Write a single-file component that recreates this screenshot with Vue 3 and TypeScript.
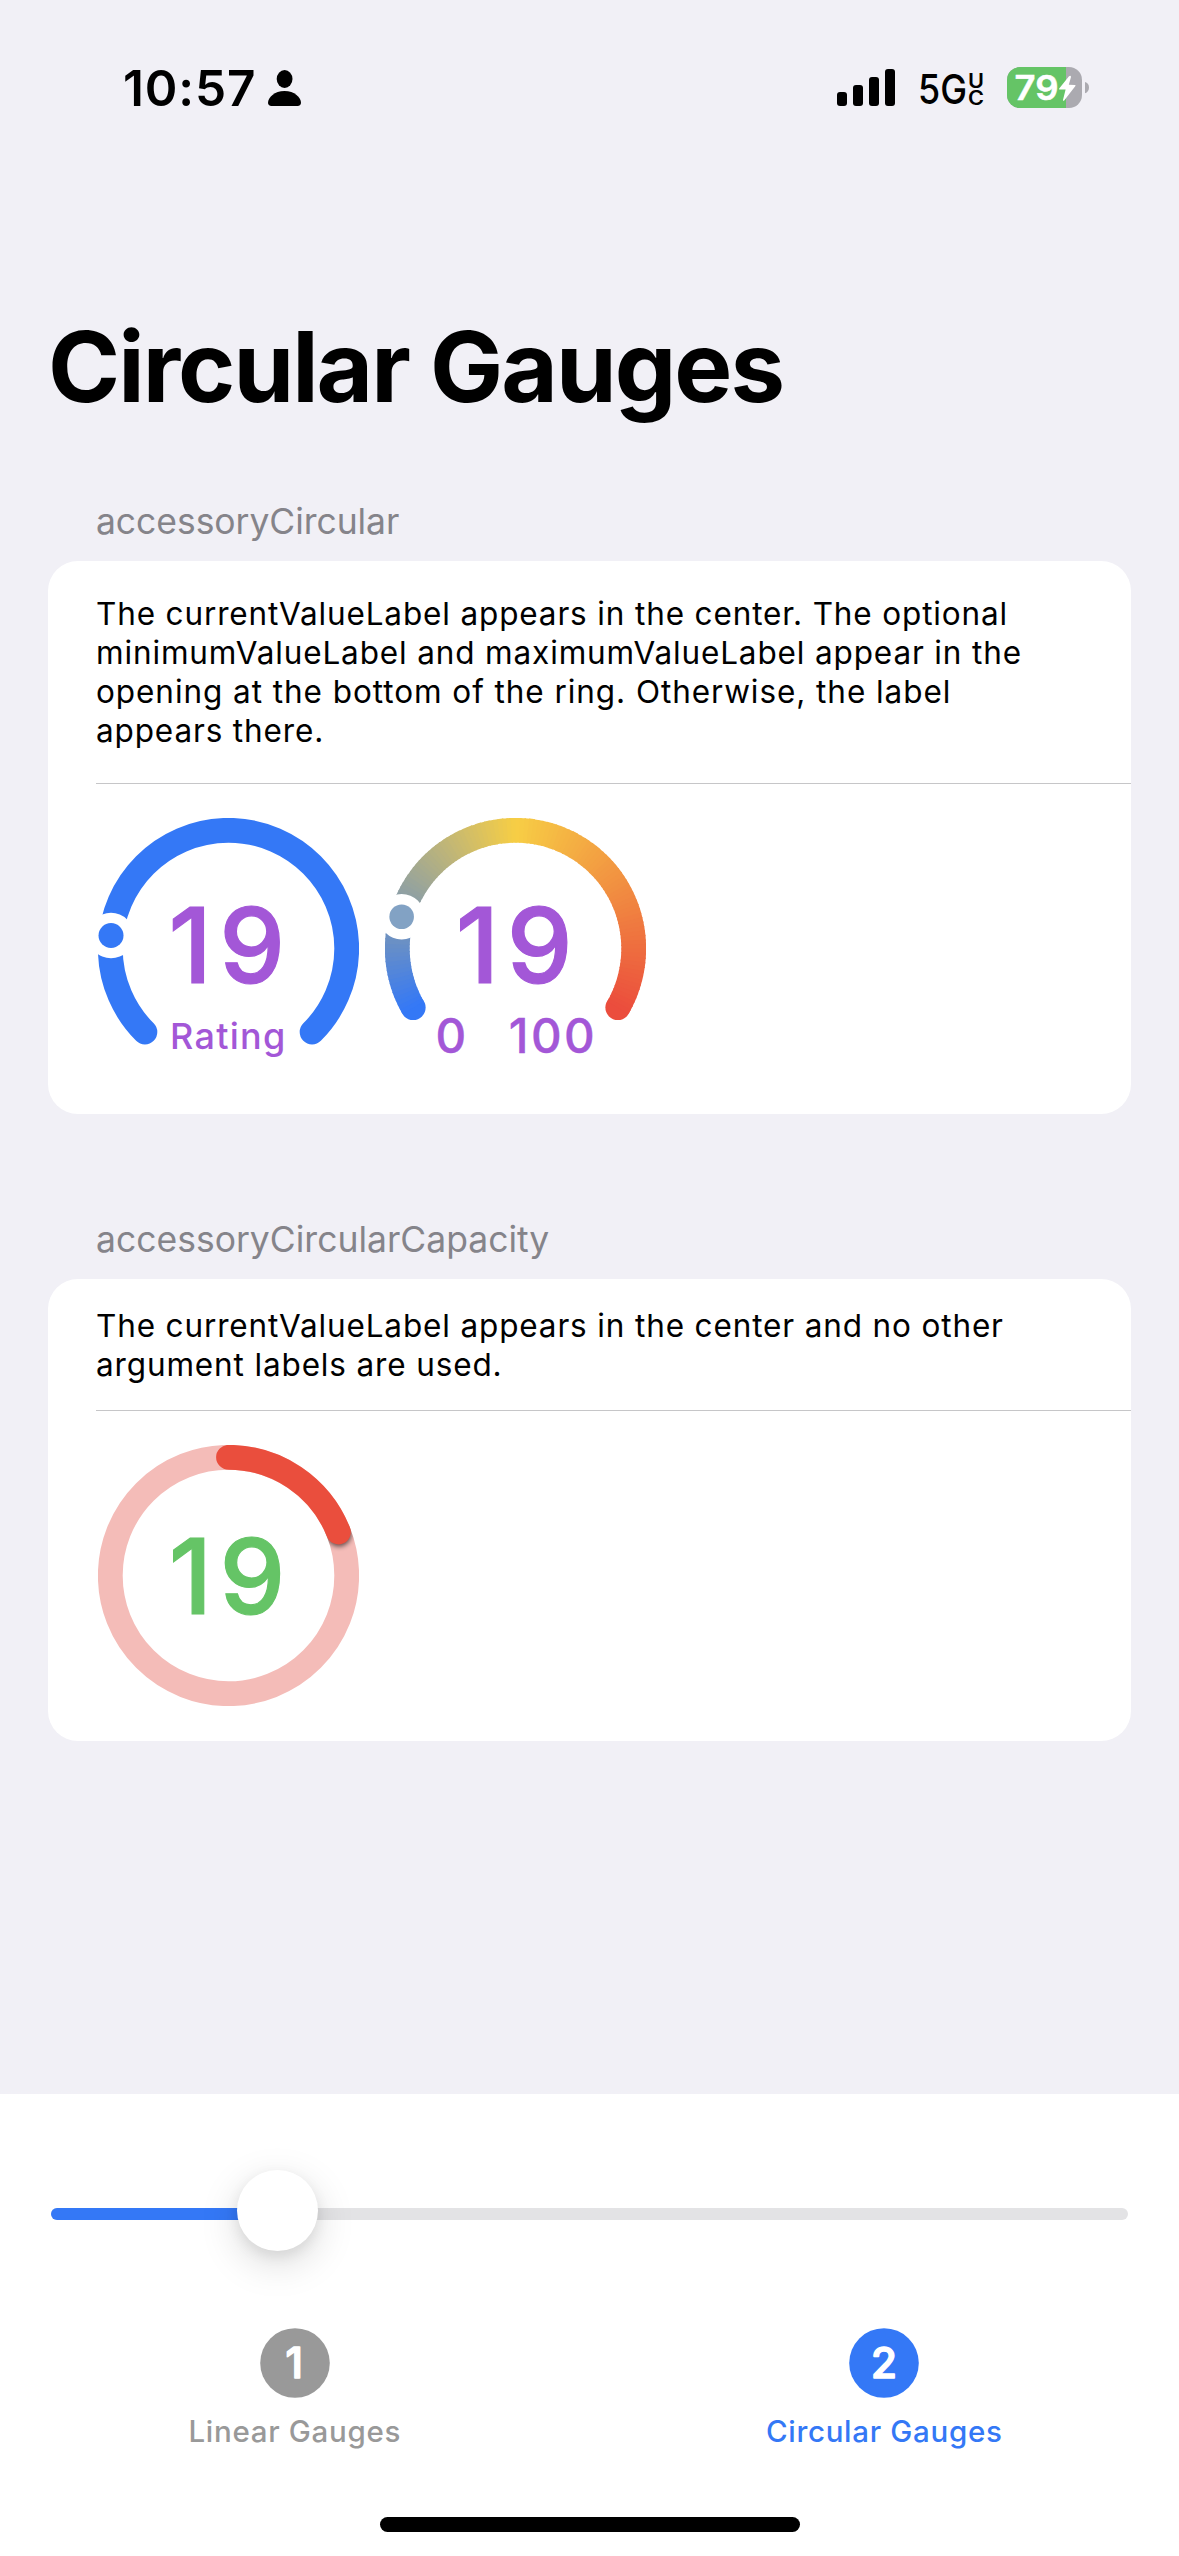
<script setup lang="ts">
import { computed, ref } from 'vue'

const value = ref(19)
const fraction = computed(() => value.value / 100)

const C = 130.5
const R = 118.2

interface Point { x: number; y: number }

// Angles are in degrees, measured clockwise from twelve o'clock.
function polar(deg: number): Point {
  const a = (deg * Math.PI) / 180
  return { x: C + R * Math.sin(a), y: C - R * Math.cos(a) }
}

function arc(from: number, to: number): string {
  const a = polar(from)
  const b = polar(to)
  const large = to - from > 180 ? 1 : 0
  return `M${a.x.toFixed(2)} ${a.y.toFixed(2)}A${R} ${R} 0 ${large} 1 ${b.x.toFixed(2)} ${b.y.toFixed(2)}`
}

const stops = [[52, 120, 246], [247, 206, 69], [235, 77, 61]]

function tint(t: number): string {
  const i = t < 0.5 ? 0 : 1
  const k = Math.min(1, Math.max(0, (t - i * 0.5) * 2))
  const mix = stops[i].map((v, n) => Math.round(v + (stops[i + 1][n] - v) * k))
  return `rgb(${mix.join(',')})`
}

const segments = Array.from({ length: 120 }, (_, i) => ({
  d: arc(-120 + i * 2, Math.min(120, -120 + i * 2 + 2.6)),
  color: tint((i + 0.5) / 120),
}))

const ringKnob = computed(() => polar(-135 + 270 * fraction.value))
const gradientKnob = computed(() => polar(-120 + 240 * fraction.value))
const gradientStart = polar(-120)
const gradientEnd = polar(120)
const capacityEnd = computed(() => polar(360 * fraction.value))

const tabs = [
  { n: 1, label: 'Linear Gauges', active: false, x: 25.4 },
  { n: 2, label: 'Circular Gauges', active: true, x: 22 },
]
</script>

<template>
  <div class="screen">
    <header class="status">
      <span class="time">10:57</span>
      <svg class="person" width="33" height="36" viewBox="0 0 33 36">
        <ellipse cx="16.6" cy="9" rx="7.9" ry="8.9" />
        <path d="M3.5 36C1.2 36 0 34.8 0 32.8C0 27.5 6.5 21 16.5 21S33 27.5 33 32.8C33 34.8 31.8 36 29.5 36Z" />
      </svg>
      <svg class="signal" width="58" height="37" viewBox="0 0 58 37">
        <rect x="0" y="23" width="10" height="14" rx="3" />
        <rect x="16" y="16" width="10" height="21" rx="3" />
        <rect x="32" y="8" width="10" height="29" rx="3" />
        <rect x="48" y="0" width="10" height="37" rx="3" />
      </svg>
      <svg class="network" width="63" height="41" viewBox="0 0 63 41">
        <text x="-2" y="37.4" font-size="41.5" font-weight="500" textLength="49" lengthAdjust="spacingAndGlyphs">5G</text>
        <text x="48" y="20.6" font-size="19.5" font-weight="600" textLength="16" lengthAdjust="spacingAndGlyphs">U</text>
        <text x="48" y="38" font-size="19.5" font-weight="600" textLength="16" lengthAdjust="spacingAndGlyphs">C</text>
      </svg>
      <svg class="battery" width="82" height="41" viewBox="0 0 82 41">
        <defs>
          <clipPath id="cell"><rect width="75" height="41" rx="13" /></clipPath>
        </defs>
        <g clip-path="url(#cell)">
          <rect width="75" height="41" fill="#abaab0" />
          <rect width="59" height="41" fill="#65c466" />
        </g>
        <path d="M78 15C80.6 15.8 82 17.8 82 20.5S80.6 25.4 78 26.3Z" fill="#abaab0" />
        <text x="7.5" y="33.3" font-size="34" font-weight="600" fill="#fff" stroke="#fff" stroke-width="0.5" textLength="44" lengthAdjust="spacingAndGlyphs">79</text>
        <path d="M62 9.2L52.2 21.4Q51.6 22.3 52.6 22.4L58.6 22.6L56 33Q56 34.4 57.2 33.5L68.4 19Q69 18.1 67.8 18L61.8 17.8L64 10Q63.8 7.8 62 9.2Z" fill="#fff" />
      </svg>
    </header>

    <main class="content">
      <h1>Circular Gauges</h1>

      <section class="group">
        <h2 class="tight">accessoryCircular</h2>
        <div class="card">
          <p class="tall">
            The currentValueLabel appears in the center. The optional<br />
            minimumValueLabel and maximumValueLabel appear in the<br />
            <span class="loose">opening at the bottom of the ring. Otherwise, the label</span><br />
            appears there.
          </p>
          <div class="gauges">
            <svg class="gauge" width="261" height="261" viewBox="0 0 261 261">
              <path :d="arc(-135, 135)" class="ring blue" />
              <circle :cx="ringKnob.x" :cy="ringKnob.y" r="22.8" fill="#fff" />
              <circle :cx="ringKnob.x" :cy="ringKnob.y" r="12.5" fill="#3478f6" />
              <text class="value purple" x="70.5" y="165">{{ value }}</text>
              <text class="label purple" x="72" y="231">Rating</text>
            </svg>
            <svg class="gauge" width="261" height="261" viewBox="0 0 261 261">
              <circle :cx="gradientStart.x" :cy="gradientStart.y" r="12.5" :fill="tint(0)" />
              <circle :cx="gradientEnd.x" :cy="gradientEnd.y" r="12.5" :fill="tint(1)" />
              <path v-for="s in segments" :key="s.d" :d="s.d" class="segment" :stroke="s.color" />
              <circle :cx="gradientKnob.x" :cy="gradientKnob.y" r="22.8" fill="#fff" />
              <circle :cx="gradientKnob.x" :cy="gradientKnob.y" r="12.3" fill="#82a2c4" />
              <text class="value purple" x="70.8" y="165">{{ value }}</text>
              <text class="bound purple" x="50.6" y="234.6">0</text>
              <text class="bound purple" x="123.8" y="234.6">100</text>
            </svg>
          </div>
        </div>
      </section>

      <section class="group">
        <h2>accessoryCircularCapacity</h2>
        <div class="card">
          <p>
            The currentValueLabel appears in the center and no other<br />
            argument labels are used.
          </p>
          <div class="gauges">
            <svg class="gauge" width="261" height="261" viewBox="0 0 261 261">
              <defs>
                <mask id="track" maskUnits="userSpaceOnUse" x="0" y="0" width="261" height="261">
                  <circle :cx="C" :cy="C" :r="R" fill="none" stroke="#fff" stroke-width="24.8" />
                </mask>
                <filter id="soft" x="-50%" y="-50%" width="200%" height="200%">
                  <feGaussianBlur stdDeviation="2.6" />
                </filter>
              </defs>
              <circle :cx="C" :cy="C" :r="R" fill="none" stroke="#f4bcb8" stroke-width="24.8" />
              <g mask="url(#track)">
                <circle :cx="capacityEnd.x + 0.5" :cy="capacityEnd.y + 2" r="12.4" fill="#000" opacity="0.6" filter="url(#soft)" />
              </g>
              <path :d="arc(0, 360 * fraction)" class="ring red" />
              <text class="value green" x="70.7" y="169.3">{{ value }}</text>
            </svg>
          </div>
        </div>
      </section>
    </main>

    <footer class="panel">
      <div class="slider">
        <div class="fill" :style="{ width: 186 + 'px' }"></div>
        <div class="knob"></div>
      </div>
      <nav class="tabs">
        <div v-for="t in tabs" :key="t.n" class="tab" :class="{ active: t.active }">
          <svg width="70" height="70" viewBox="0 0 70 70">
            <circle cx="35" cy="35" r="34.8" fill="currentColor" />
            <text class="digit" :x="t.x" y="50">{{ t.n }}</text>
          </svg>
          <span>{{ t.label }}</span>
        </div>
      </nav>
      <div class="home"></div>
    </footer>
  </div>
</template>

<style>
body {
  margin: 0;
  background: #f1f0f6;
}
</style>

<style scoped>
.screen {
  width: 1179px;
  height: 2556px;
  display: flex;
  flex-direction: column;
  overflow: hidden;
  background: #f1f0f6;
  color: #000;
  font-family: Inter, 'Liberation Sans', sans-serif;
}
.status {
  box-sizing: border-box;
  height: 307px;
  padding: 58px 90px 0 123px;
  display: flex;
  align-items: flex-start;
}
.time {
  width: 145px;
  font-size: 49.5px;
  line-height: 60px;
  font-weight: 600;
  letter-spacing: 0.87px;
}
.person {
  margin-top: 12px;
}
.signal {
  margin: 11px 25px 0 auto;
}
.network {
  margin: 9px 24px 0 0;
  overflow: visible;
}
.battery {
  margin-top: 9px;
}
.content {
  flex: 1;
  padding: 0 48px;
}
h1 {
  margin: 0 0 73px;
  font-size: 97.5px;
  line-height: 120px;
  font-weight: 700;
  letter-spacing: -1.96px;
  white-space: nowrap;
}
.group {
  margin-bottom: 104px;
}
h2 {
  margin: 0 0 17px;
  padding-left: 48px;
  font-size: 35.5px;
  line-height: 44px;
  font-weight: 400;
  color: #85848a;
}
.tight {
  letter-spacing: -0.06px;
}
.card {
  border-radius: 30px;
  background: #fff;
}
.card p {
  margin: 0 0 0 48px;
  padding: 27px 0 26px;
  border-bottom: 1px solid #c6c6c8;
  font-size: 31.5px;
  line-height: 39px;
  letter-spacing: 0.86px;
  white-space: nowrap;
}
.card p.tall {
  padding: 33px 0;
}
.loose {
  letter-spacing: 0.94px;
}
.gauges {
  display: flex;
  gap: 26.7px;
  padding: 34px 0 35px 49.8px;
}
.gauge {
  display: block;
}
.ring {
  fill: none;
  stroke-width: 24.8px;
  stroke-linecap: round;
}
.segment {
  fill: none;
  stroke-width: 24.8px;
}
.blue {
  stroke: #3478f6;
}
.red {
  stroke: #ea4e3d;
}
.purple {
  fill: #a357d7;
  stroke: #a357d7;
}
.green {
  fill: #65c466;
  stroke: #65c466;
}
.value {
  font-size: 104.5px;
  font-weight: 500;
  letter-spacing: 7.5px;
  stroke-width: 1.2px;
}
.label {
  font-size: 36px;
  font-weight: 500;
  letter-spacing: 1.28px;
  stroke-width: 0;
}
.bound {
  font-size: 47.5px;
  font-weight: 500;
  letter-spacing: 2.4px;
  stroke-width: 0.4px;
}
.panel {
  height: 462px;
  flex: none;
  background: #fff;
  display: flex;
  flex-direction: column;
  align-items: stretch;
}
.slider {
  position: relative;
  height: 12px;
  margin: 114px 51px 0;
  border-radius: 6px;
  background: #e3e3e5;
}
.fill {
  height: 12px;
  padding-right: 40px;
  border-radius: 6px;
  background: #3478f6;
}
.knob {
  position: absolute;
  left: 186px;
  top: -38.3px;
  width: 81px;
  height: 81px;
  border-radius: 50%;
  background: #fff;
  box-shadow: 0 12px 39px rgba(0, 0, 0, 0.15), 0 5px 14px rgba(0, 0, 0, 0.08);
}
.tabs {
  display: grid;
  grid-template-columns: 1fr 1fr;
  margin-top: 108px;
}
.tab {
  display: flex;
  flex-direction: column;
  align-items: center;
  gap: 15px;
  color: #999;
}
.tab.active {
  color: #3478f6;
}
.tab span {
  font-size: 29.5px;
  line-height: 36px;
  font-weight: 500;
  letter-spacing: 0.69px;
}
.digit {
  fill: #fff;
  stroke: #fff;
  stroke-width: 1.6px;
  stroke-linejoin: round;
  font-size: 42px;
  font-weight: 500;
}
.home {
  width: 420px;
  height: 15px;
  margin: 68px auto 0;
  border-radius: 8px;
  background: #000;
}
</style>
